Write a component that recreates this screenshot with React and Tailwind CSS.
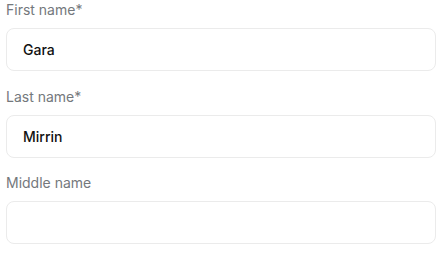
export default function App() {
  const fields = [
    { label: "First name*", value: "Gara" },
    { label: "Last name*", value: "Mirrin" },
    { label: "Middle name", value: "" },
  ];

  return (
    <div className="w-[445px] h-[253px] bg-white pl-[6px] font-['Inter','Noto_Sans',sans-serif]">
      <form className="flex w-[430px] flex-col gap-[15.5px]">
        {fields.map((f) => (
          <div key={f.label} className="flex flex-col gap-2">
            <label className="h-5 text-[14px] leading-5 text-[#74787c]">{f.label}</label>
            <input
              type="text"
              defaultValue={f.value}
              className="h-[43px] w-full rounded-lg border border-[#ebebeb] bg-white px-4 text-[14px] font-medium text-[#111] outline-none"
            />
          </div>
        ))}
      </form>
    </div>
  );
}
